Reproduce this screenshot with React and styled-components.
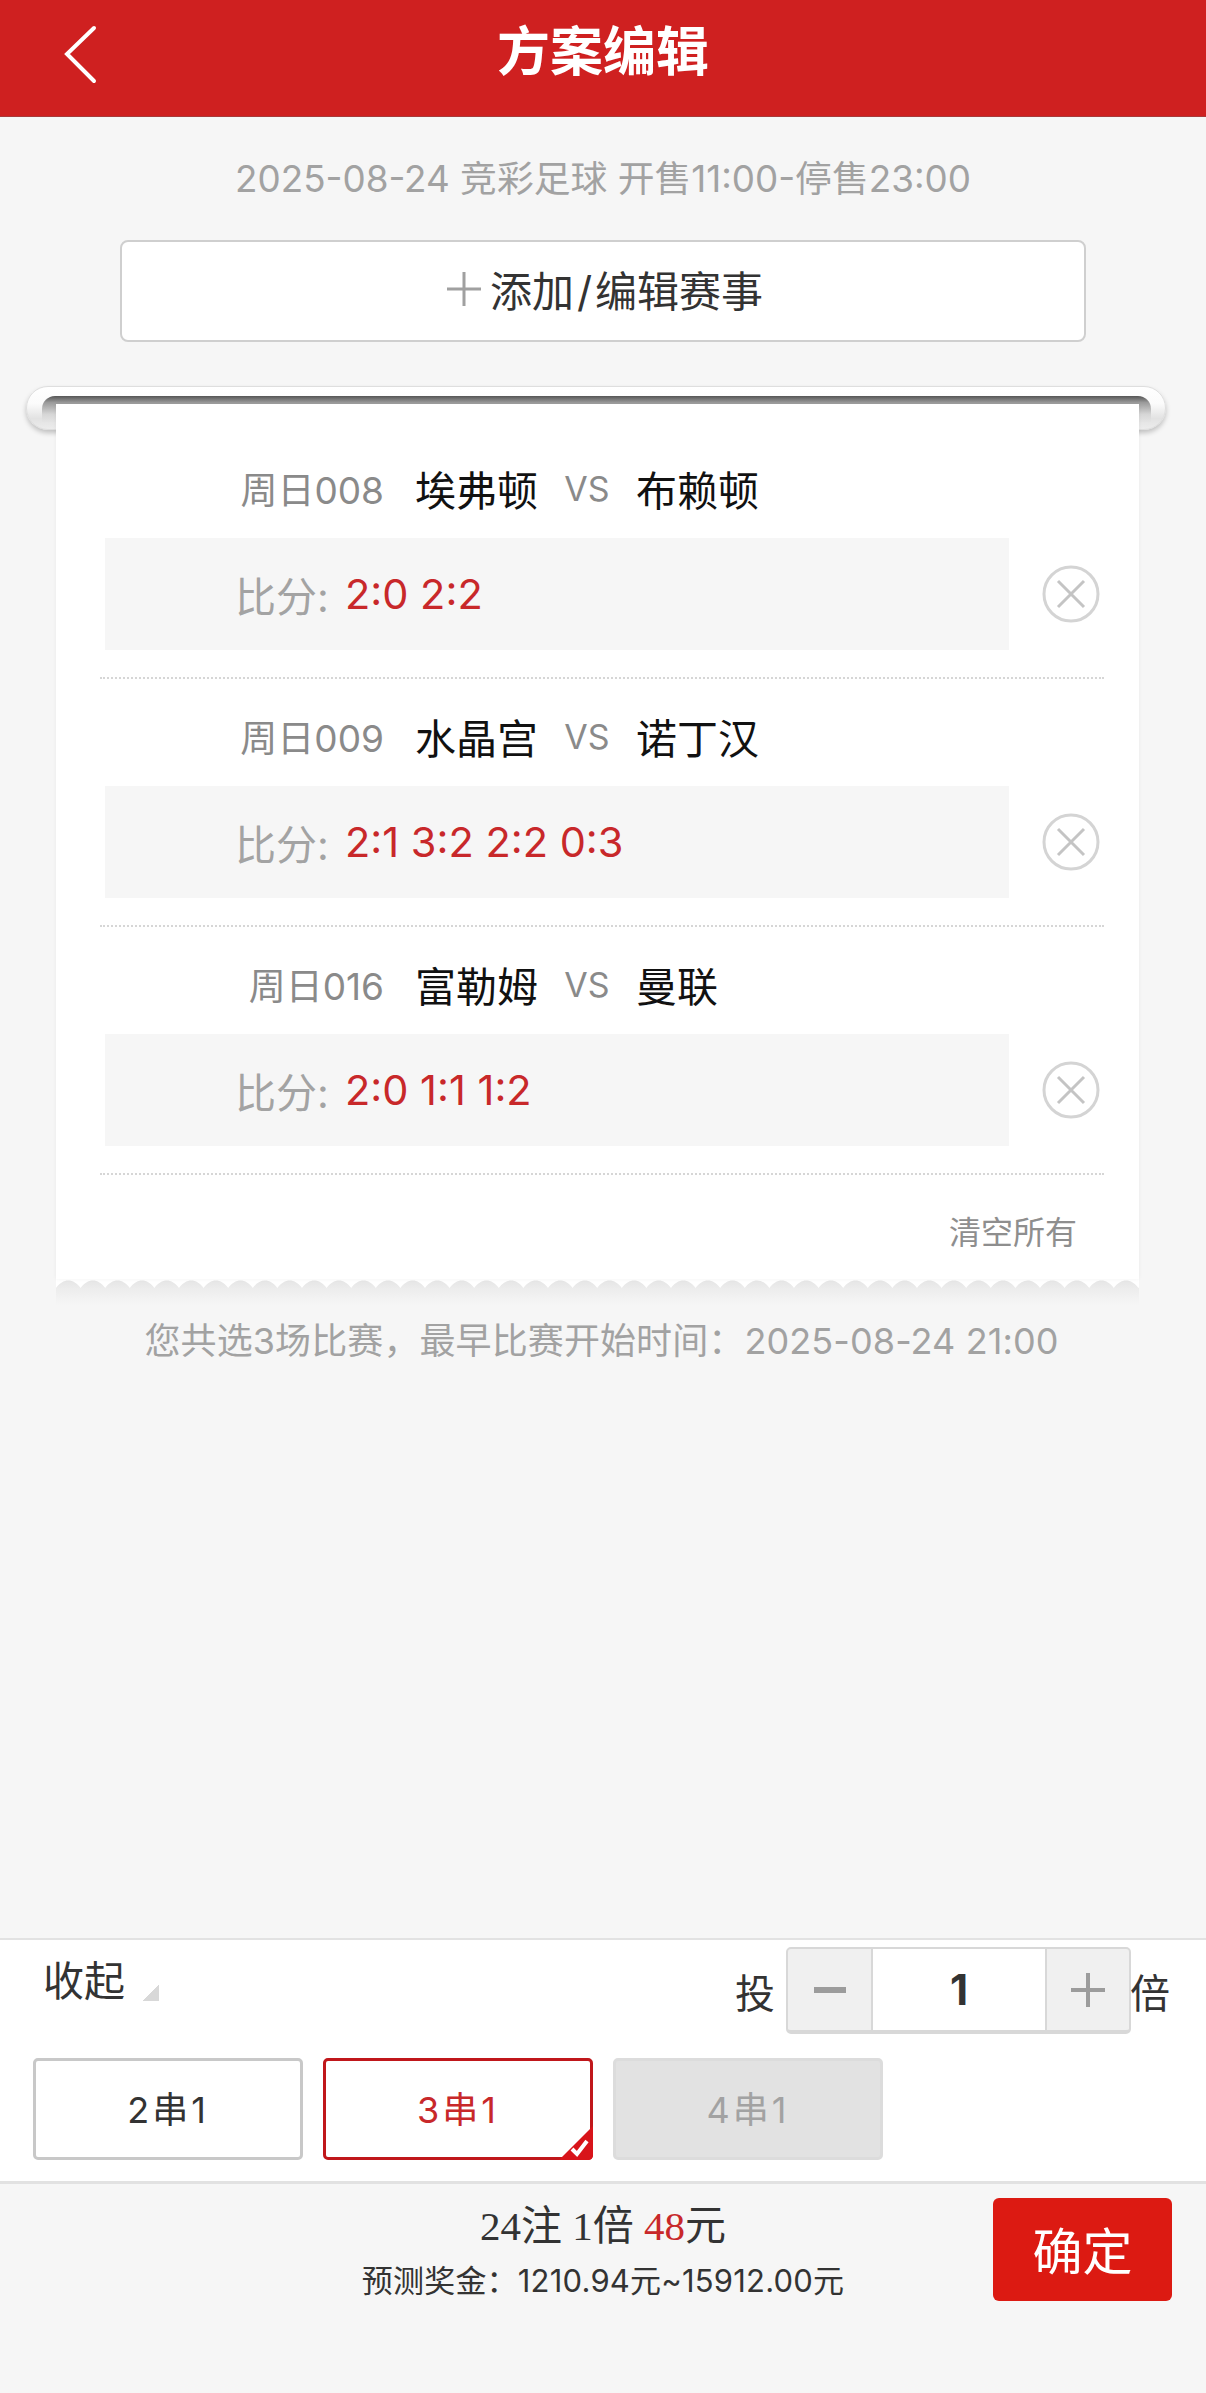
import React from "react";
import styled, { createGlobalStyle } from "styled-components";

const GlobalStyle = createGlobalStyle`
  html, body {
    margin: 0;
    padding: 0;
    background: #f6f6f6;
  }
  * {
    box-sizing: border-box;
  }
`;

const Page = styled.div`
  width: 1206px;
  height: 2393px;
  display: flex;
  flex-direction: column;
  overflow: hidden;
  background: #f6f6f6;
  font-family: Inter, "Noto Sans CJK SC", sans-serif;
`;

const Header = styled.header`
  height: 117px;
  flex-shrink: 0;
  display: grid;
  grid-template-columns: 1fr auto 1fr;
  align-items: center;
  background: #cf2020;
  border-bottom: 1px solid #a83a3a;
`;

const BackIcon = styled.svg`
  width: 40px;
  height: 60px;
  margin: 0 0 9px 61px;
  display: block;
`;

const Title = styled.h1`
  margin: 0 0 11px;
  color: #fff;
  font-size: 53px;
  font-weight: 700;
  line-height: 1;
`;

const SaleInfo = styled.div`
  height: 123px;
  padding-bottom: 6px;
  flex-shrink: 0;
  display: flex;
  align-items: center;
  justify-content: center;
  color: #a2a2a2;
  font-size: 36.8px;
`;

const AddButton = styled.div`
  width: 966px;
  height: 102px;
  padding: 0 0 5px 4px;
  flex-shrink: 0;
  margin-left: 120px;
  display: flex;
  align-items: center;
  justify-content: center;
  gap: 9px;
  background: #fff;
  border: 2px solid #cfcfcf;
  border-radius: 8px;
  color: #333;
  font-size: 42px;
`;

const Slash = styled.span`
  margin: 0 3px;
`;

const PlusIcon = styled.svg`
  width: 34px;
  height: 34px;
  display: block;
`;

const Receipt = styled.section`
  width: 1140px;
  margin: 44px 0 0 26px;
  flex-shrink: 0;
`;

const Roll = styled.div`
  position: relative;
  height: 44px;
  border: 1px solid #dedede;
  border-radius: 22px;
  background: linear-gradient(#ffffff 0%, #fbfbfb 40%, #e2e2e2 75%, #ececec 100%);
  box-shadow: 0 3px 5px rgba(0, 0, 0, 0.22);

  &::before {
    content: "";
    position: absolute;
    top: 9px;
    left: 15px;
    right: 14px;
    height: 26px;
    border-radius: 13px 13px 0 0;
    background: linear-gradient(#555555 0%, #9a9a9a 25%, #d6d6d6 70%, #e4e4e4 100%);
  }
`;

const Paper = styled.div`
  position: relative;
  width: 1083px;
  margin: -26px 0 0 30px;
  padding: 27px 35px 0 44px;
  background: #fff;
  box-shadow: 0 0 4px rgba(0, 0, 0, 0.05);
`;

const MatchItem = styled.div`
  height: 248px;
  border-bottom: 2px dotted #d6d6d6;
`;

const MatchTitle = styled.div`
  height: 107px;
  padding-top: 7px;
  display: flex;
  align-items: center;
`;

const MatchCode = styled.span`
  width: 284px;
  text-align: right;
  color: #8a8a8a;
  font-size: 37px;
`;

const TeamName = styled.span`
  color: #111;
  font-size: 41px;
  white-space: nowrap;
  margin-left: ${(props) => (props.$home ? "31px" : "0")};
  min-width: 122px;
`;

const Versus = styled.span`
  width: 98px;
  text-align: center;
  color: #8a8a8a;
  font-size: 34px;
`;

const ScoreRow = styled.div`
  padding-left: 5px;
  display: flex;
  align-items: center;
  gap: 33px;
`;

const ScoreBox = styled.div`
  width: 904px;
  height: 112px;
  padding: 0 0 0 130px;
  display: flex;
  align-items: center;
  background: #f6f6f6;
`;

const ScoreLabel = styled.span`
  width: 110px;
  color: #a3a3a3;
  font-size: 41px;
`;

const ScoreValue = styled.span`
  color: #c8282a;
  font-size: 41.5px;
`;

const CloseIcon = styled.svg`
  width: 58px;
  height: 58px;
  display: block;
`;

const ClearRow = styled.div`
  height: 104px;
  padding: 5px 27px 0 0;
  display: flex;
  align-items: center;
  justify-content: flex-end;
  color: #8e8e8e;
  font-size: 32px;
`;

const PaperEdge = styled.svg`
  display: block;
  width: 1083px;
  height: 26px;
  margin-left: 30px;
  overflow: hidden;
`;

const Caption = styled.div`
  height: 80px;
  margin-top: 6px;
  padding-right: 3px;
  flex-shrink: 0;
  display: flex;
  align-items: flex-start;
  justify-content: center;
  color: #a2a2a2;
  font-size: 36px;
  letter-spacing: 0.1px;
  line-height: 60px;
`;

const Footer = styled.footer`
  margin-top: auto;
  flex-shrink: 0;
`;

const Controls = styled.div`
  height: 246px;
  padding-top: 7px;
  background: #fff;
  border-top: 2px solid #e2e2e2;
  border-bottom: 3px solid #e2e2e2;
`;

const ControlRow = styled.div`
  display: flex;
  justify-content: space-between;
  padding: 0 36px 0 43px;
`;

const Collapse = styled.div`
  display: flex;
  align-items: flex-end;
  gap: 17px;
  height: 68px;
  color: #333;
  font-size: 41px;
  line-height: 68px;
`;

const CollapseArrow = styled.i`
  display: block;
  width: 17px;
  height: 17px;
  margin-bottom: 14px;
  background: linear-gradient(to bottom right, transparent 50%, #d8d8d8 50%);
`;

const Stepper = styled.div`
  display: flex;
  align-items: center;
  color: #333;
  font-size: 40px;
`;

const StepperBody = styled.div`
  width: 345px;
  height: 87px;
  margin: 0 -1px 0 11px;
  display: grid;
  grid-template-columns: 83px 1fr 82px;
  background: #f0f0f0;
  border: 2px solid #d8d8d8;
  border-bottom-width: 4px;
  border-radius: 5px;
`;

const StepperButton = styled.div`
  display: flex;
  align-items: center;
  justify-content: center;
`;

const StepperValue = styled.div`
  display: flex;
  align-items: center;
  justify-content: center;
  background: #fff;
  border-left: 2px solid #d8d8d8;
  border-right: 2px solid #d8d8d8;
  color: #333;
  font-size: 42px;
  font-weight: 700;
`;

const StepperIcon = styled.svg`
  width: 38px;
  height: 38px;
  display: block;
`;

const PassRow = styled.div`
  display: flex;
  gap: 20px;
  margin-top: 24px;
  padding-left: 33px;
`;

const PassButton = styled.div`
  position: relative;
  width: 270px;
  height: 102px;
  padding-bottom: 4px;
  display: flex;
  align-items: center;
  justify-content: center;
  border-radius: 5px;
  font-size: 36px;
  letter-spacing: 3px;
  border: 3px solid ${(props) => (props.$selected ? "#c0171b" : props.$disabled ? "#dcdcdc" : "#c8c8c8")};
  background: ${(props) => (props.$disabled ? "#e2e2e2" : "#fff")};
  color: ${(props) => (props.$selected ? "#c8282a" : props.$disabled ? "#a2a2a2" : "#333")};
`;

const CheckBadge = styled.svg`
  position: absolute;
  right: -3px;
  bottom: -3px;
  width: 34px;
  height: 34px;
  display: block;
`;

const Summary = styled.div`
  display: grid;
  grid-template-columns: 1fr auto 1fr;
  height: 209px;
  padding-top: 14px;
`;

const Totals = styled.div`
  text-align: center;
  color: #333;
`;

const TotalLine = styled.div`
  margin-top: 1px;
  height: 54px;
  font-family: "Liberation Serif", "Noto Sans CJK SC", serif;
  font-size: 41px;
  line-height: 54px;
`;

const TotalAmount = styled.span`
  color: #c8282a;
`;

const PrizeLine = styled.div`
  margin-top: 6px;
  font-size: 31px;
  letter-spacing: 0.2px;
  line-height: 44px;
`;

const ConfirmButton = styled.div`
  justify-self: end;
  width: 179px;
  height: 103px;
  padding-top: 4px;
  margin-right: 34px;
  display: flex;
  align-items: center;
  justify-content: center;
  background: #dc1a12;
  border-radius: 6px;
  color: #fff;
  font-size: 50px;
  line-height: 1;
`;

const matches = [
  { code: "周日008", home: "埃弗顿", away: "布赖顿", scores: "2:0 2:2" },
  { code: "周日009", home: "水晶宫", away: "诺丁汉", scores: "2:1 3:2 2:2 0:3" },
  { code: "周日016", home: "富勒姆", away: "曼联", scores: "2:0 1:1 1:2" },
];

// lower edge of the paper: rounded grey bumps biting up into the white
const edgePath = () => {
  let d = "M0 0 L0 9";
  for (let x = 0; x < 1083; x += 24.6) {
    d += ` C${x + 7} -1 ${x + 17.6} -1 ${x + 24.6} 9`;
  }
  return d + " L1083 0 Z";
};

const App = () => {
  return (
    <Page>
      <GlobalStyle />
      <Header>
        <BackIcon viewBox="0 0 40 60" fill="none" stroke="#fff" strokeWidth="4" strokeLinecap="round">
          <path d="M33 4 L6 30 L33 57" />
        </BackIcon>
        <Title>方案编辑</Title>
      </Header>
      <SaleInfo>2025-08-24 竞彩足球 开售11:00-停售23:00</SaleInfo>
      <AddButton>
        <PlusIcon viewBox="0 0 34 34" stroke="#a0a0a0" strokeWidth="3">
          <path d="M0 17 H34 M17 0 V34" />
        </PlusIcon>
        <span>
          添加<Slash>/</Slash>编辑赛事
        </span>
      </AddButton>
      <Receipt>
        <Roll />
        <Paper>
          {matches.map((match) => (
            <MatchItem key={match.code}>
              <MatchTitle>
                <MatchCode>{match.code}</MatchCode>
                <TeamName $home>{match.home}</TeamName>
                <Versus>VS</Versus>
                <TeamName>{match.away}</TeamName>
              </MatchTitle>
              <ScoreRow>
                <ScoreBox>
                  <ScoreLabel>比分:</ScoreLabel>
                  <ScoreValue>{match.scores}</ScoreValue>
                </ScoreBox>
                <CloseIcon viewBox="0 0 58 58" fill="none" stroke="#d4d4d4">
                  <circle cx="29" cy="29" r="27" strokeWidth="3" />
                  <path d="M16 16 L42 42 M42 16 L16 42" strokeWidth="3" stroke="#c4c4c4" />
                </CloseIcon>
              </ScoreRow>
            </MatchItem>
          ))}
          <ClearRow>清空所有</ClearRow>
        </Paper>
        <PaperEdge viewBox="0 0 1083 26">
          <defs>
            <linearGradient id="edgeFade" x1="0" y1="0" x2="0" y2="1">
              <stop offset="0" stopColor="#e4e4e4" />
              <stop offset="0.4" stopColor="#ededed" />
              <stop offset="1" stopColor="#f6f6f6" />
            </linearGradient>
          </defs>
          <rect width="1083" height="26" fill="url(#edgeFade)" />
          <path d={edgePath()} fill="#fff" />
        </PaperEdge>
      </Receipt>
      <Caption>您共选3场比赛，最早比赛开始时间：2025-08-24 21:00</Caption>
      <Footer>
        <Controls>
          <ControlRow>
            <Collapse>
              收起
              <CollapseArrow />
            </Collapse>
            <Stepper>
              投
              <StepperBody>
                <StepperButton>
                  <StepperIcon viewBox="0 0 38 38" stroke="#9c9c9c" strokeWidth="6">
                    <path d="M3 19 H35" />
                  </StepperIcon>
                </StepperButton>
                <StepperValue>1</StepperValue>
                <StepperButton>
                  <StepperIcon viewBox="0 0 38 38" stroke="#9c9c9c" strokeWidth="4">
                    <path d="M2 19 H36 M19 2 V36" />
                  </StepperIcon>
                </StepperButton>
              </StepperBody>
              倍
            </Stepper>
          </ControlRow>
          <PassRow>
            <PassButton>2串1</PassButton>
            <PassButton $selected>
              3串1
              <CheckBadge viewBox="0 0 34 34">
                <path d="M34 0 V29 Q34 34 29 34 H0 Z" fill="#d8141a" />
                <path d="M13 23 L18 28 L28 15" fill="none" stroke="#fff" strokeWidth="4" />
              </CheckBadge>
            </PassButton>
            <PassButton $disabled>4串1</PassButton>
          </PassRow>
        </Controls>
        <Summary>
          <span />
          <Totals>
            <TotalLine>
              24注 1倍 <TotalAmount>48</TotalAmount>元
            </TotalLine>
            <PrizeLine>预测奖金：1210.94元~15912.00元</PrizeLine>
          </Totals>
          <ConfirmButton>确定</ConfirmButton>
        </Summary>
      </Footer>
    </Page>
  );
};

export default App;
